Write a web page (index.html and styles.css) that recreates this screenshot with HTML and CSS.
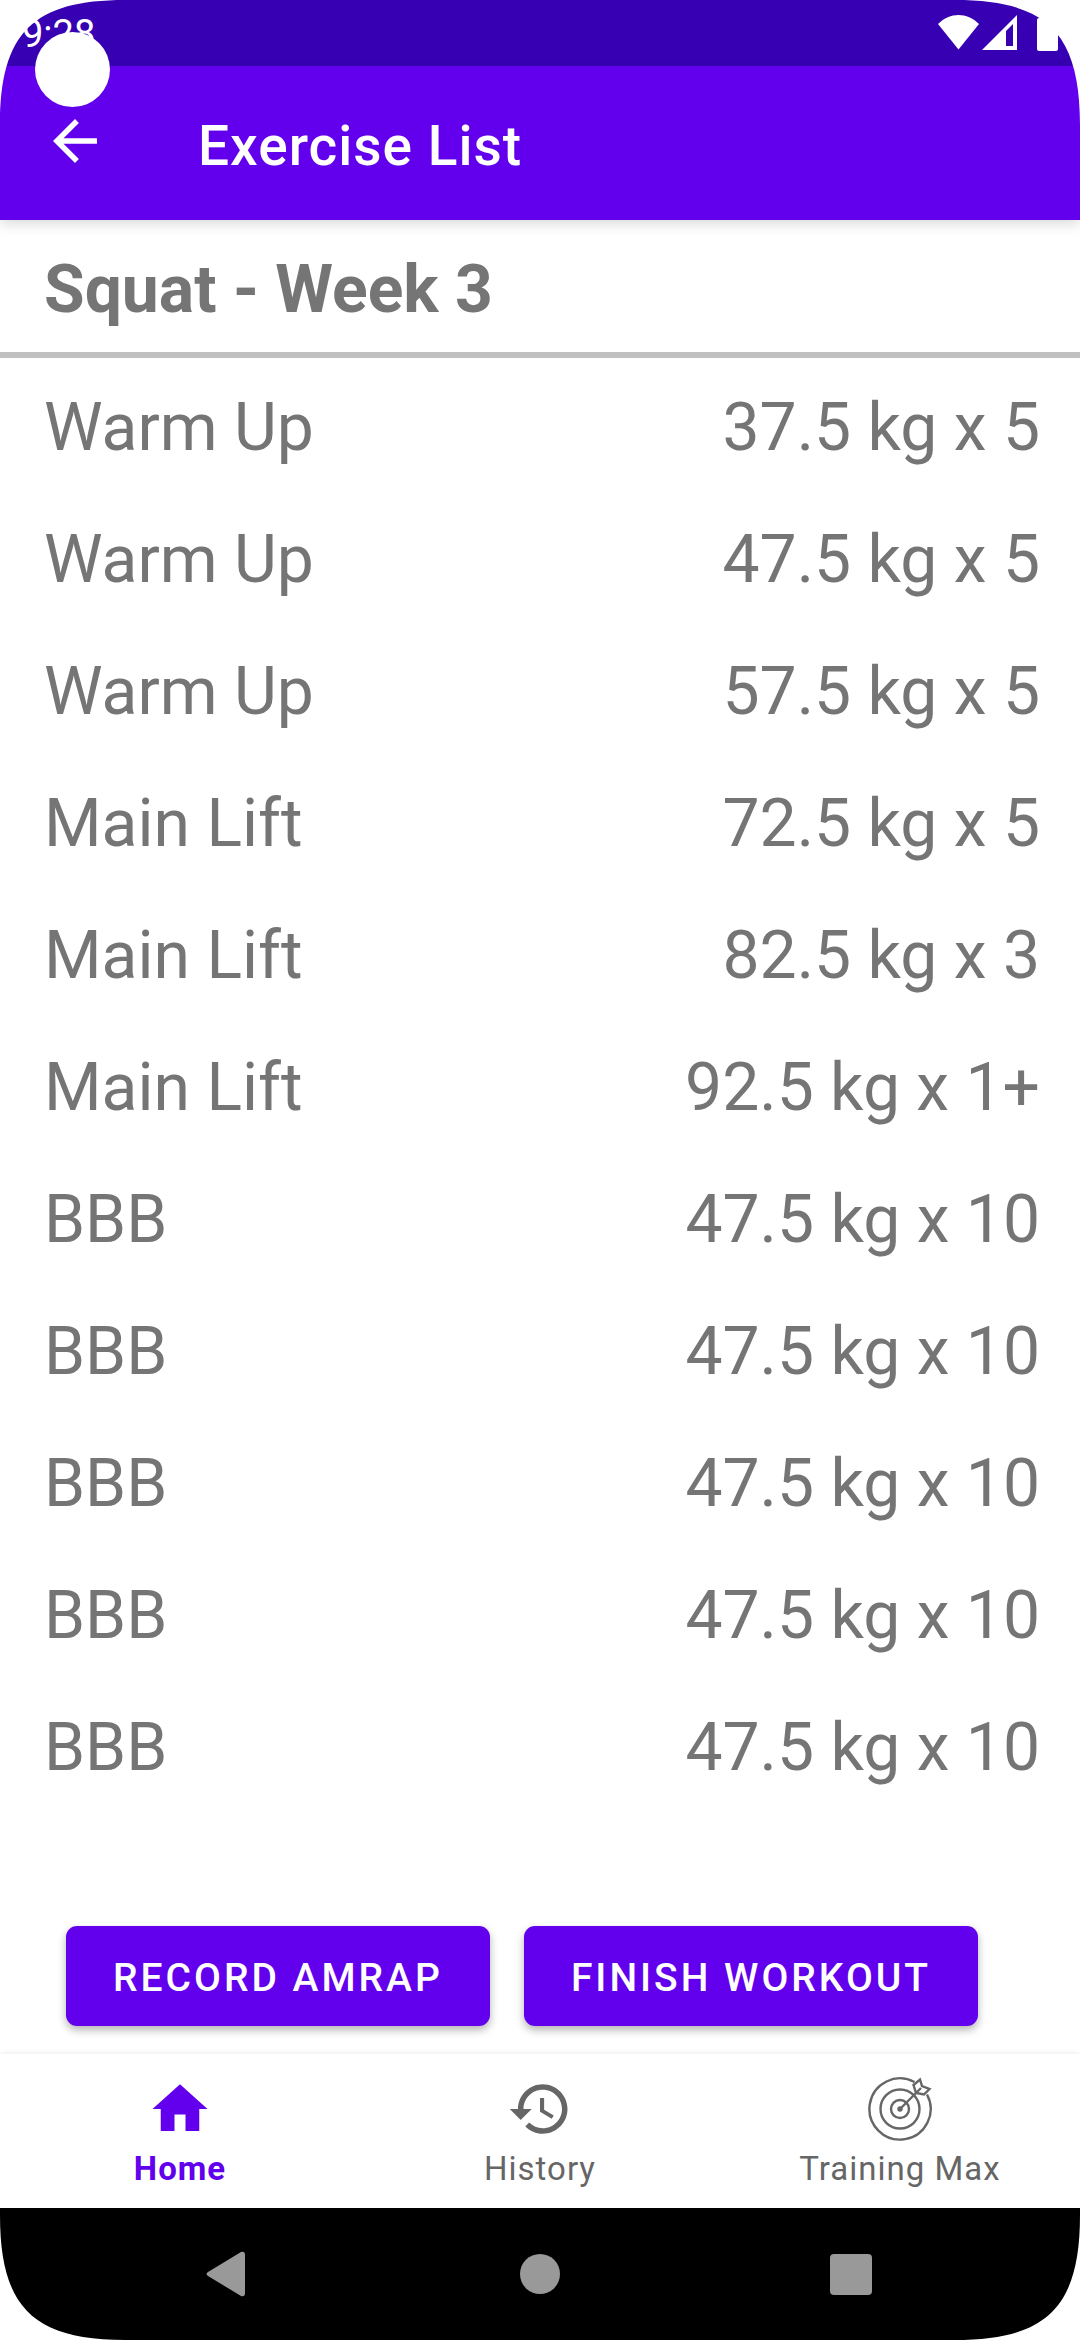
FILE: index.html
```html
<!DOCTYPE html>
<html lang="en">
<head>
<meta charset="utf-8">
<meta name="viewport" content="width=device-width, initial-scale=1">
<title>Exercise List</title>
<link rel="stylesheet" href="styles.css">
</head>
<body>
<div class="screen">
  <div class="status-bar">
    <time class="clock">9:28</time>
    <svg class="status-icons" viewBox="0 0 124 66" aria-hidden="true">
      <path d="M2 24C14 12 31 12 43 24L22.500 49.500z"/>
      <path fill-rule="evenodd" d="M46 50L81 15V50zM70 31V46H77V24z"/>
      <rect x="101" y="18" width="21" height="33" rx="2"/>
    </svg>
  </div>

  <header class="app-bar">
    <button class="back" type="button" aria-label="Back">
      <svg class="icon" viewBox="0 0 24 24" aria-hidden="true"><path d="M20 11H7.830l5.590-5.590L12 4l-8 8 8 8 1.410-1.410L7.830 13H20v-2z"/></svg>
    </button>
    <h1 class="title">Exercise List</h1>
  </header>

  <main class="content">
    <h2 class="workout">Squat - Week 3</h2>
    <table class="sets">
      <tbody>
        <tr><td>Warm Up</td><td>37.5 kg x 5</td></tr>
        <tr><td>Warm Up</td><td>47.5 kg x 5</td></tr>
        <tr><td>Warm Up</td><td>57.5 kg x 5</td></tr>
        <tr><td>Main Lift</td><td>72.5 kg x 5</td></tr>
        <tr><td>Main Lift</td><td>82.5 kg x 3</td></tr>
        <tr><td>Main Lift</td><td>92.5 kg x 1+</td></tr>
        <tr><td>BBB</td><td>47.5 kg x 10</td></tr>
        <tr><td>BBB</td><td>47.5 kg x 10</td></tr>
        <tr><td>BBB</td><td>47.5 kg x 10</td></tr>
        <tr><td>BBB</td><td>47.5 kg x 10</td></tr>
        <tr><td>BBB</td><td>47.5 kg x 10</td></tr>
      </tbody>
    </table>
    <div class="actions">
      <button class="action" type="button">RECORD AMRAP</button>
      <button class="action" type="button">FINISH WORKOUT</button>
    </div>
  </main>

  <nav class="tabs" aria-label="Main">
    <a class="tab tab-active" href="#home" aria-current="page">
      <svg class="icon" viewBox="0 0 24 24" aria-hidden="true"><path d="M10 20v-6h4v6h5v-8h3L12 3 2 12h3v8z"/></svg>
      Home
    </a>
    <a class="tab" href="#history">
      <svg class="icon" viewBox="0 0 24 24" aria-hidden="true"><path d="M13 3c-4.970 0-9 4.030-9 9H1l3.890 3.890.07.14L9 12H6c0-3.870 3.130-7 7-7s7 3.130 7 7-3.130 7-7 7c-1.930 0-3.680-.79-4.940-2.060l-1.420 1.420C8.270 19.990 10.510 21 13 21c4.970 0 9-4.030 9-9s-4.030-9-9-9zm-1 5v5l4.280 2.540.72-1.210-3.500-2.080V8H12z"/></svg>
      History
    </a>
    <a class="tab" href="#training-max">
      <svg class="icon icon-line" viewBox="0 0 66 66" aria-hidden="true">
        <path d="M47.500 6A30.600 30.600 0 1 0 60 18.500"/>
        <circle cx="33" cy="33" r="19.500"/>
        <circle cx="33" cy="33" r="9"/>
        <circle class="dot" cx="33" cy="33" r="2.700"/>
        <path d="M33 33L54 12M49 17L46.500 9L53 3.500L55 10L62.500 13L57 18.500z"/>
      </svg>
      Training Max
    </a>
  </nav>

  <div class="system-bar">
    <button class="key" type="button" aria-label="Back"><svg class="icon" viewBox="0 0 66 66" aria-hidden="true"><path d="M12 31L45 11Q49 10 49 14V52Q49 56 45 55L12 35Q9 33 12 31z"/></svg></button>
    <button class="key" type="button" aria-label="Home"><svg class="icon" viewBox="0 0 66 66" aria-hidden="true"><circle cx="33" cy="33" r="20"/></svg></button>
    <button class="key" type="button" aria-label="Overview"><svg class="icon" viewBox="0 0 66 66" aria-hidden="true"><rect x="12" y="13" width="42" height="41" rx="4"/></svg></button>
  </div>

  <div class="camera"></div>
  <svg class="corner corner-tl" viewBox="0 0 125 125" aria-hidden="true"><path d="M0 0V125C0 33 33 0 125 0z"/></svg>
  <svg class="corner corner-tr" viewBox="0 0 125 125" aria-hidden="true"><path d="M0 0V125C0 33 33 0 125 0z"/></svg>
  <svg class="corner corner-bl" viewBox="0 0 125 125" aria-hidden="true"><path d="M0 0V125C0 33 33 0 125 0z"/></svg>
  <svg class="corner corner-br" viewBox="0 0 125 125" aria-hidden="true"><path d="M0 0V125C0 33 33 0 125 0z"/></svg>
</div>
</body>
</html>
```
FILE: styles.css
```css
* {
  box-sizing: border-box;
}

body {
  margin: 0;
  background: #fff;
  color: #757575;
  font-family: Roboto, "Liberation Sans", sans-serif;
}

button {
  border: 0;
  padding: 0;
  background: none;
  font: inherit;
  color: inherit;
}

.screen {
  position: relative;
  display: flex;
  flex-direction: column;
  min-height: 100vh;
}

.icon {
  display: block;
  width: 66px;
  height: 66px;
  fill: currentColor;
}

.icon-line {
  fill: none;
  stroke: currentColor;
  stroke-width: 2.4;
}

.icon-line .dot {
  fill: currentColor;
  stroke: none;
}

/* Status bar */
.status-bar {
  display: flex;
  justify-content: space-between;
  height: 66px;
  padding: 0 20px 0 22px;
  background: #3700b3;
  color: #fff;
}

.clock {
  padding-top: 12px;
  font-size: 38px;
  line-height: 45px;
}

.status-icons {
  width: 124px;
  height: 66px;
  fill: currentColor;
}

/* App bar */
.app-bar {
  position: relative;
  display: flex;
  align-items: center;
  gap: 90px;
  height: 154px;
  padding: 0 42px 4px;
  background: #6200ee;
  box-shadow: 0 4px 12px rgba(0, 0, 0, 0.15);
  color: #fff;
}

.title {
  margin: 0;
  padding-top: 10px;
  font-size: 55px;
  line-height: 64px;
  font-weight: 500;
  letter-spacing: 1px;
}

/* Workout */
.content {
  display: flex;
  flex: 1;
  flex-direction: column;
}

.workout {
  margin: 0;
  padding: 31px 44px 24px;
  border-bottom: 6px solid #c0c0c0;
  font-size: 66px;
  line-height: 77px;
  font-weight: 700;
}

.sets {
  width: 100%;
  border-collapse: collapse;
  font-size: 66px;
  line-height: 77px;
}

.sets td {
  padding: 31px 40px 24px 44px;
}

.sets td:last-child {
  text-align: right;
}

.actions {
  display: flex;
  gap: 34px;
  margin-top: auto;
  padding: 0 66px 28px;
}

.action {
  height: 100px;
  padding: 4px 47px 0;
  border-radius: 11px;
  background: #6200ee;
  box-shadow: 0 4px 8px rgba(0, 0, 0, 0.3);
  color: #fff;
  font-size: 39px;
  font-weight: 500;
  letter-spacing: 3px;
}

/* Bottom tabs */
.tabs {
  display: grid;
  grid-template-columns: repeat(3, 1fr);
  height: 154px;
  background: #fff;
  box-shadow: 0 0 6px rgba(0, 0, 0, 0.1);
}

.tab {
  display: flex;
  flex-direction: column;
  align-items: center;
  gap: 7px;
  padding-top: 22px;
  color: #666;
  font-size: 33px;
  line-height: 39px;
  letter-spacing: 1px;
  text-decoration: none;
}

.tab-active {
  color: #6200ee;
  font-weight: 700;
}

/* System navigation */
.system-bar {
  display: flex;
  justify-content: center;
  align-items: center;
  gap: 245px;
  height: 132px;
  background: #000;
  color: #999;
}

/* Display cutout and rounded display corners */
.camera {
  position: absolute;
  top: 32px;
  left: 35px;
  width: 75px;
  height: 75px;
  border-radius: 50%;
  background: #fff;
}

.corner {
  position: absolute;
  width: 125px;
  height: 125px;
  fill: #fff;
}

.corner-tl {
  top: 0;
  left: 0;
}

.corner-tr {
  top: 0;
  right: 0;
  transform: scaleX(-1);
}

.corner-bl {
  bottom: 0;
  left: 0;
  transform: scaleY(-1);
}

.corner-br {
  right: 0;
  bottom: 0;
  transform: scale(-1, -1);
}
```
